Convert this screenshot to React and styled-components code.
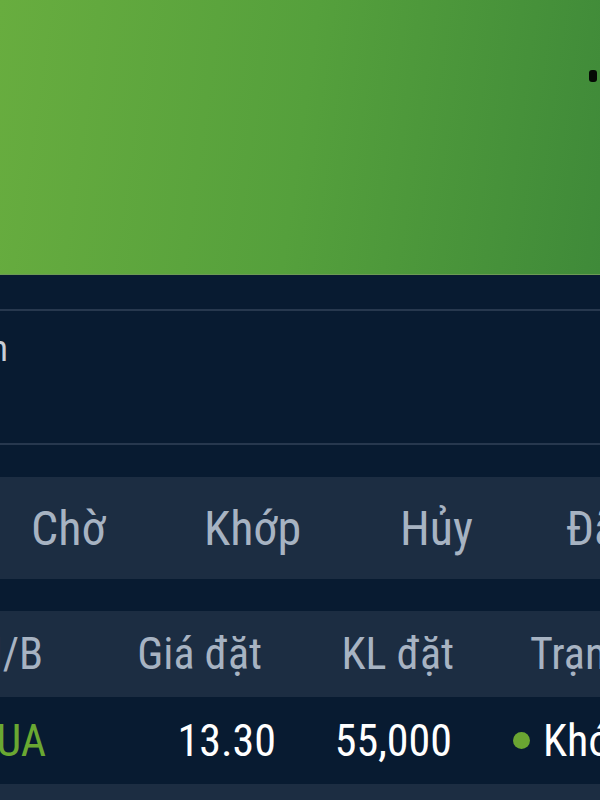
import React from 'react';
import styled, { createGlobalStyle } from 'styled-components';

const GlobalStyle = createGlobalStyle`
    html, body {
        margin: 0;
        padding: 0;
        background: #081b31;
        overflow: hidden;
    }
    body {
        font-family: Roboto, "Noto Sans", sans-serif;
        font-stretch: condensed;
    }
`;

const Screen = styled.div`
    width: 600px;
    height: 800px;
    overflow: hidden;
    background: #081b31;
    display: flex;
    flex-direction: column;
`;

const Banner = styled.div`
    height: 275px;
    flex-shrink: 0;
    background: linear-gradient(98deg, #68ad3f 0%, #55a03c 50%, #3f8a39 100%);
    border-bottom: 1px solid #6c9a55;
    display: flex;
    justify-content: flex-end;
    align-items: flex-start;
    padding: 70px 3px 0 0;
    box-sizing: border-box;
`;

const MenuDot = styled.div`
    width: 8px;
    height: 12px;
    border-radius: 3px;
    background: #050a05;
`;

const Spacer = styled.div`
    height: ${p => p.h}px;
    flex-shrink: 0;
`;

const Divider = styled.div`
    height: 2px;
    flex-shrink: 0;
    background: #27384e;
`;

const InfoRow = styled.div`
    height: 132px;
    flex-shrink: 0;
    display: flex;
    justify-content: flex-end;
    align-items: flex-start;
    width: 8px;
    padding-top: 18px;
    box-sizing: border-box;
`;

const InfoText = styled.span`
    font-size: 36px;
    line-height: 40px;
    color: #c9ced6;
    white-space: nowrap;
`;

const Tabs = styled.div`
    height: 102px;
    flex-shrink: 0;
    background: #1c2d42;
    display: grid;
    grid-template-columns: 173px 196px 166px auto;
    align-items: center;
    padding-left: 31px;
    box-sizing: border-box;
`;

const Tab = styled.div`
    font-size: 48px;
    color: #a7b3c2;
    white-space: nowrap;
`;

const Row = styled.div`
    height: ${p => p.h}px;
    flex-shrink: 0;
    background: ${p => (p.shade ? '#1c2d42' : '#081b31')};
    display: grid;
    grid-template-columns: 46px 230px 178px 1fr;
    align-items: center;
`;

const Cell = styled.div`
    display: flex;
    justify-content: ${p => (p.left ? 'flex-start' : 'flex-end')};
    align-items: center;
    padding-right: ${p => p.pr || 0}px;
    padding-left: ${p => p.pl || 0}px;
    font-size: 44px;
    white-space: nowrap;
    color: ${p => p.color || '#ffffff'};
`;

const StatusDot = styled.span`
    width: 17px;
    height: 17px;
    border-radius: 50%;
    background: #6aa532;
    margin-right: 13px;
    flex-shrink: 0;
`;

export default function App() {
    return (
        <Screen>
            <GlobalStyle />
            <Banner>
                <MenuDot />
            </Banner>
            <Spacer h={34} />
            <Divider />
            <InfoRow>
                <InfoText>Sổ lệnh trong ngày hôm nay theo mã chứng khoán</InfoText>
            </InfoRow>
            <Divider />
            <Spacer h={32} />
            <Tabs>
                <Tab>Chờ</Tab>
                <Tab>Khớp</Tab>
                <Tab>Hủy</Tab>
                <Tab>Đã sửa</Tab>
            </Tabs>
            <Spacer h={32} />
            <Row shade h={86}>
                <Cell color="#a7b3c2" pr={3}>M/B</Cell>
                <Cell color="#a7b3c2" pr={14}>Giá đặt</Cell>
                <Cell color="#a7b3c2">KL đặt</Cell>
                <Cell left color="#a7b3c2" pl={76}>Trạng thái</Cell>
            </Row>
            <Row h={87}>
                <Cell color="#6aa832">MUA</Cell>
                <Cell>13.30</Cell>
                <Cell pr={2}>55,000</Cell>
                <Cell left pl={59}>
                    <StatusDot />
                    Khớp hết
                </Cell>
            </Row>
            <Row shade h={40} />
        </Screen>
    );
}
